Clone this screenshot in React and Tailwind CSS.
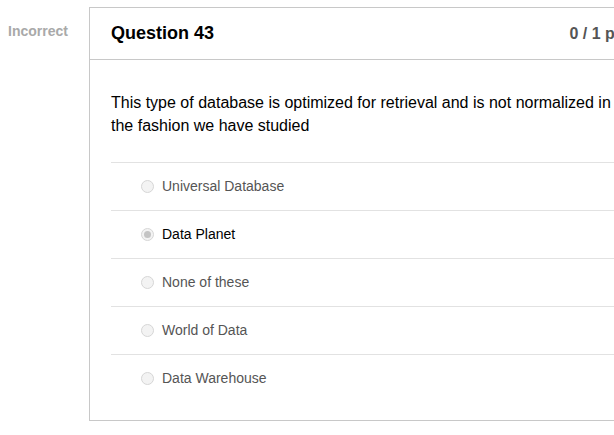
import React from 'react';

const answers = [
  { id: 'a1', text: 'Universal Database', selected: false },
  { id: 'a2', text: 'Data Planet', selected: true },
  { id: 'a3', text: 'None of these', selected: false },
  { id: 'a4', text: 'World of Data', selected: false },
  { id: 'a5', text: 'Data Warehouse', selected: false },
];

function Radio({ checked }) {
  return (
    <span className="w-[13px] h-[13px] rounded-full border border-[#d6d6d6] bg-[#f3f3f3] flex items-center justify-center shrink-0">
      {checked && <span className="w-[7px] h-[7px] rounded-full bg-[#c4c4c4]" />}
    </span>
  );
}

export default function App() {
  return (
    <div className="w-[614px] h-[435px] overflow-hidden bg-white font-['Liberation_Sans',Arial,sans-serif]">
      <div className="flex pt-[7px]">
        <div className="w-[89px] shrink-0 pl-[8px] pt-[12px]">
          <span className="text-[14px] font-bold text-[#a9a9a9] leading-[18px]">Incorrect</span>
        </div>
        <div className="w-[562px] shrink-0 border border-[#c8c8c8] h-[414px]">
          <div className="h-[52px] flex items-center justify-between px-[21px] border-b border-[#c8c8c8]">
            <h2 className="text-[18px] font-bold text-black">Question 43</h2>
            <span className="text-[16px] font-bold text-[#555]">0 / 1 pts</span>
          </div>
          <div className="pl-[21px]">
            <p className="pt-[31px] pb-[25px] pr-[30px] text-[16px] leading-[23px] text-black">
              This type of database is optimized for retrieval and is not normalized in the fashion we have studied
            </p>
            <div>
              {answers.map((a) => (
                <div key={a.id} className="h-[48px] border-t border-[#e2e2e2] flex items-center gap-[8px] pl-[30px]">
                  <Radio checked={a.selected} />
                  <span className={`text-[14px] ${a.selected ? 'text-black' : 'text-[#555]'}`}>{a.text}</span>
                </div>
              ))}
            </div>
          </div>
        </div>
      </div>
    </div>
  );
}
